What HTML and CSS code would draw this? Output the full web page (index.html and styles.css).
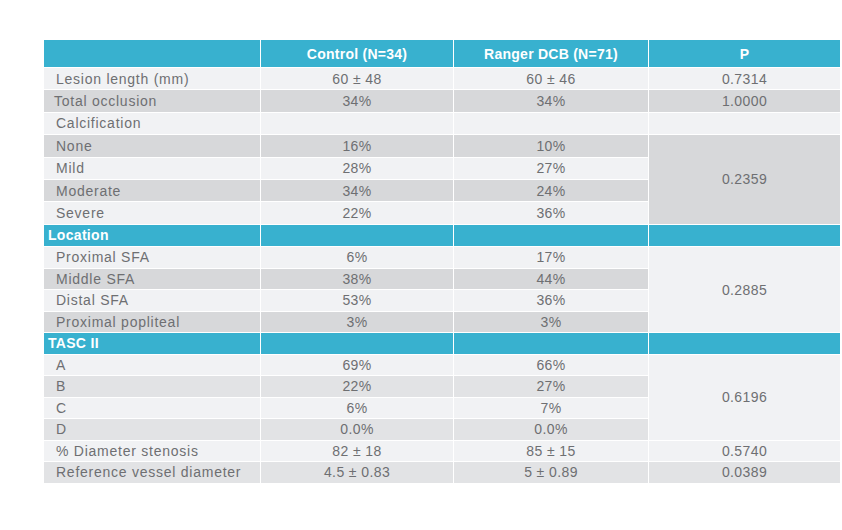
FILE: index.html
```html
<!DOCTYPE html>
<html>
<head>
<meta charset="utf-8">
<link rel="stylesheet" href="styles.css">
</head>
<body>
<table class="data">
  <colgroup>
    <col class="c1"><col class="c2"><col class="c3"><col class="c4">
  </colgroup>
  <thead>
    <tr class="head">
      <th></th><th>Control (N=34)</th><th>Ranger DCB (N=71)</th><th>P</th>
    </tr>
  </thead>
  <tbody>
    <tr class="light top"><td class="label">Lesion length (mm)</td><td>60 ± 48</td><td>60 ± 46</td><td>0.7314</td></tr>
    <tr class="dark top"><td class="label tight">Total occlusion</td><td>34%</td><td>34%</td><td>1.0000</td></tr>
    <tr class="light top"><td class="label">Calcification</td><td></td><td></td><td></td></tr>
    <tr class="dark top"><td class="label">None</td><td>16%</td><td>10%</td><td rowspan="4" class="p-dark">0.2359</td></tr>
    <tr class="light top"><td class="label">Mild</td><td>28%</td><td>27%</td></tr>
    <tr class="dark top"><td class="label">Moderate</td><td>34%</td><td>24%</td></tr>
    <tr class="light top"><td class="label">Severe</td><td>22%</td><td>36%</td></tr>
    <tr class="section top"><td class="label">Location</td><td></td><td></td><td></td></tr>
    <tr class="light"><td class="label">Proximal SFA</td><td>6%</td><td>17%</td><td rowspan="4" class="p-light">0.2885</td></tr>
    <tr class="dark"><td class="label">Middle SFA</td><td>38%</td><td>44%</td></tr>
    <tr class="light"><td class="label">Distal SFA</td><td>53%</td><td>36%</td></tr>
    <tr class="dark"><td class="label">Proximal popliteal</td><td>3%</td><td>3%</td></tr>
    <tr class="section"><td class="label">TASC II</td><td></td><td></td><td></td></tr>
    <tr class="light"><td class="label">A</td><td>69%</td><td>66%</td><td rowspan="4" class="p-light">0.6196</td></tr>
    <tr class="mid"><td class="label">B</td><td>22%</td><td>27%</td></tr>
    <tr class="light"><td class="label">C</td><td>6%</td><td>7%</td></tr>
    <tr class="mid"><td class="label">D</td><td>0.0%</td><td>0.0%</td></tr>
    <tr class="light"><td class="label">% Diameter stenosis</td><td>82 ± 18</td><td>85 ± 15</td><td>0.5740</td></tr>
    <tr class="mid"><td class="label">Reference vessel diameter</td><td>4.5 ± 0.83</td><td>5 ± 0.89</td><td>0.0389</td></tr>
  </tbody>
</table>
</body>
</html>
```

FILE: styles.css
```css
html, body {
  margin: 0;
  padding: 0;
  background: #ffffff;
}

body {
  font-family: "Liberation Sans", Arial, sans-serif;
}

.data {
  margin: 39px 0 0 43px;
  border-collapse: separate;
  border-spacing: 1px;
  table-layout: fixed;
  width: 798px;
  font-size: 14px;
  letter-spacing: 0.4px;
  color: #6e6f72;
}

.c1 { width: 216px; }
.c2 { width: 192px; }
.c3 { width: 194px; }
.c4 { width: 191px; }

.data th,
.data td {
  padding: 0;
  text-align: center;
  vertical-align: middle;
  line-height: 16px;
}

.head th {
  height: 27px;
  background: #38b1cf;
  color: #ffffff;
  font-weight: bold;
  letter-spacing: 0.25px;
}

.data tbody tr {
  height: 20.5px;
}

.data tbody tr.top {
  height: 21.4px;
}

.data td.label {
  text-align: left;
  padding-left: 12px;
  letter-spacing: 0.75px;
}

.data td.tight {
  padding-left: 10px;
}

.light td { background: #f1f2f4; }
.dark td { background: #d7d8da; }
.mid td { background: #e2e3e5; }

.data td.p-dark { background: #d7d8da; }
.data td.p-light { background: #f1f2f4; }

.section td {
  background: #38b1cf;
  color: #ffffff;
  font-weight: bold;
}

.data .section td.label {
  padding-left: 4px;
  letter-spacing: 0.3px;
}
```
